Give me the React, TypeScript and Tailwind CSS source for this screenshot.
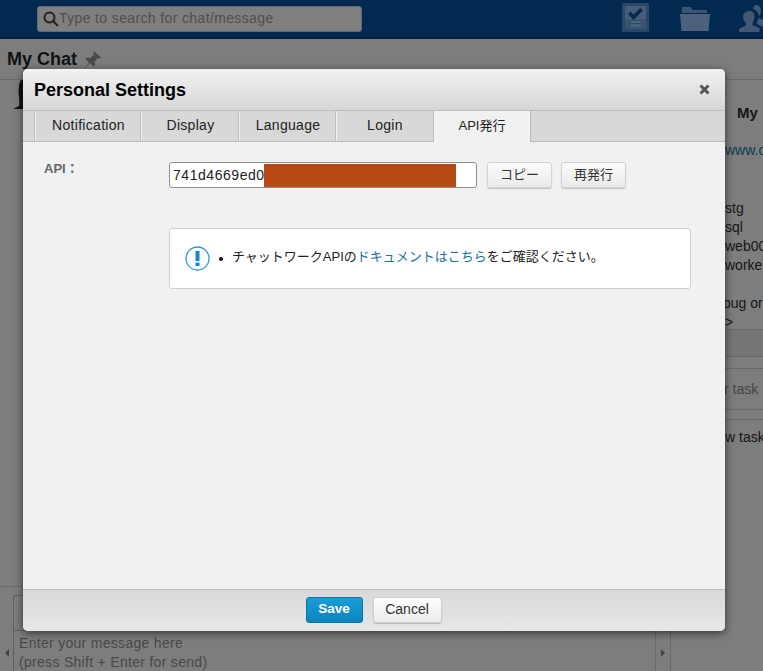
export default function App() {
  const font = { fontFamily: '"Liberation Sans", "Noto Sans CJK JP", sans-serif' };
  const tabs = ["Notification", "Display", "Language", "Login"];
  const tabWidths = ["w-[106px]", "w-[98px]", "w-[97px]", "w-[97px]"];
  return (
    <div style={font} className="relative h-[671px] w-[763px] overflow-hidden bg-[#7d7d7d] text-[#1a1a1a]">
      {/* Header */}
      <header className="flex h-[39px] items-center border-b-2 border-[#011f40] bg-[#02294f]">
        <div className="ml-[37px] flex h-[26px] w-[325px] items-center rounded-[3px] border border-[#5d6a76] bg-[#7f7f7f] pb-[1px] pl-[4px] text-[14px] tracking-[0.37px] text-[#4e4e4e]">
          <svg width="17" height="17" viewBox="0 0 17 17" fill="none" stroke="#222" strokeWidth="2">
            <circle cx="7.500" cy="7.500" r="5" />
            <path d="M11 11l4.500 4.500" strokeLinecap="round" />
          </svg>
          <span>Type to search for chat/message</span>
        </div>
        <div className="ml-auto flex items-center">
          <svg width="27" height="29" viewBox="0 0 27 29" className="mb-[2px]">
            <path d="M0 1.500A1.500 1.500 0 011.500 0h24A1.500 1.500 0 0127 1.500V29H0z" fill="#2a4768" />
            <path d="M3 3h21v14H3z" fill="#465d78" />
            <path d="M6 11l2.500-2.500 3 3 7-6.500 2.500 2.500-9.500 9.500z" fill="#0a2a4e" />
            <path d="M3 16h5.500v5h10v-5H24v10H3z" fill="#38526f" />
            <path d="M8.500 18h10v2h-10zM8.500 21.500h10v2h-10z" fill="#50667e" />
          </svg>
          <svg width="30" height="24" viewBox="0 0 30 24" className="ml-[31px]">
            <path d="M2 0h9l1 3h15v3H2z" fill="#3e556f" />
            <path d="M0 7h30l-1.500 17H1.500z" fill="#4c627c" />
          </svg>
          <svg width="24" height="27" viewBox="0 0 24 27" className="mb-[1px] ml-[29px]" fill="#425873">
            <path d="M11 6c3 0 4.500 2.500 4.500 5.500S14 17 13.500 18v2l7 3v4H0v-3l7-3.500V18c-1.500-1-3-3.500-3-6.500S6.500 6 11 6z" />
            <path d="M17 0c3 0 5 2.500 5 5.500 0 2.500-1 4.500-2.500 6V13l4.500 2v7l-3-1.500-3-1.500v-2c1-1.500 1.500-4 1.500-6.500S18 5 14 4c.5-2 1.500-4 3-4z" />
          </svg>
        </div>
      </header>

      {/* Chat title */}
      <div className="flex h-[41px] items-center gap-[7px] border-b border-[#6a6a6a] pl-[7px]">
        <span className="text-[18px] font-bold text-[#111]">My Chat</span>
        <svg width="17" height="18" viewBox="0 0 17 18" fill="#4a4a4a" className="mt-[1px]">
          <path d="M10 0l7 6.500-1.500 1-1.500-.5-3.500 3.500.5 3.500-1.500 1.500-3.500-3.500L0 18l5-6.500-3.500-3.500L3 6.500l3.500.5L10 3.500 9.500 1.500z" />
        </svg>
      </div>

      {/* Page behind the dialog */}
      <div className="flex h-[591px]">
        <main className="flex w-[671px] flex-col">
          <div className="flex-1 pl-[13px]">
            <svg width="11" height="29" viewBox="0 0 11 29" fill="#111">
              <path d="M8 0h3v29H0l6-3c1-2 0-6 0-10C5 10 6 3 8 0z" />
            </svg>
          </div>
          <div className="flex h-[85px] border-t border-[#6a6a6a] pt-[8px]">
            <div className="flex w-[13px] items-center justify-center pt-[40px]">
              <span className="h-0 w-0 border-y-[4px] border-r-[4px] border-y-transparent border-r-[#444]" />
            </div>
            <div className="flex flex-1 flex-col">
              <div className="h-[36px] rounded-tl-[3px] border-l border-t border-b border-[#5f5f5f]" />
              <div className="flex-1 overflow-hidden border-l border-[#5f5f5f] pl-[5px] pt-[3px] text-[14px] leading-[19px] tracking-[0.3px] text-[#484848]">
                <div>Enter your message here</div>
                <div>(press Shift + Enter for send)</div>
              </div>
            </div>
            <div className="flex w-[16px] items-center justify-center border-x border-[#6a6a6a] pt-[40px]">
              <span className="h-0 w-0 border-y-[4px] border-l-[4px] border-y-transparent border-l-[#444]" />
            </div>
          </div>
        </main>
        <aside className="min-w-0 flex-1 whitespace-nowrap pl-[54px] text-[14px] leading-[19px] text-[#151515]">
          <div className="mt-[23px] pl-[12px] text-[15px] font-bold leading-[20px]">My</div>
          <div className="mt-[18px] text-[#0c3a55]">www.c</div>
          <div className="mt-[39px]">stg</div>
          <div>sql</div>
          <div>web00</div>
          <div>worke</div>
          <div className="mt-[19px] -ml-[2px]">bug or</div>
          <div>&gt;</div>
          <div className="-ml-[54px] mt-[-3px] h-[28px] border-y border-[#6a6a6a] bg-[#767676]" />
          <div className="-ml-[54px] h-[12px] border-b border-[#6a6a6a]" />
          <div className="-ml-[54px] flex h-[41px] items-center border-b border-[#6a6a6a] pl-[53px] text-[#444]">r task</div>
          <div className="-ml-[54px] h-[10px] border-b border-[#6a6a6a]" />
          <div className="pt-[8px]">w task</div>
        </aside>
      </div>

      {/* Dialog */}
      <div className="absolute left-[23px] top-[69px] flex h-[562px] w-[702px] flex-col overflow-hidden rounded-[5px] bg-[#f1f1f1] shadow-[0_2px_8px_rgba(0,0,0,0.6)]">
        <div className="flex h-[42px] shrink-0 items-center justify-between border-b border-[#bdbdbd] bg-gradient-to-b from-[#f2f2f2] to-[#d6d6d6] pl-[11px] pr-[15px]">
          <h1 className="text-[18px] font-bold leading-[22px] text-black">Personal Settings</h1>
          <svg width="11" height="11" viewBox="0 0 11 11" stroke="#555" strokeWidth="3">
            <path d="M1.500 1.500l8 8M9.500 1.500l-8 8" />
          </svg>
        </div>
        <div className="flex h-[31px] shrink-0 border-b border-[#bcbcbc] bg-[#d8d8d8] pl-[12px] text-[14px] tracking-[0.3px] text-[#222]">
          {tabs.map((t, i) => (
            <div key={t} className={`flex items-center justify-center border-l border-[#f1f1f1] pb-[1px] shadow-[-1px_0_0_#bcbcbc] ${tabWidths[i]}`}>
              {t}
            </div>
          ))}
          <div className="relative z-10 -mb-px flex h-[31px] w-[98px] items-center justify-center border-x border-[#bcbcbc] bg-[#f1f1f1] pb-[1px] text-[13px] tracking-[0px]">API発行</div>
        </div>
        <div className="flex-1 pl-[21px] pt-[20px]">
          <div className="flex">
            <div className="w-[125px] text-[13px] font-bold leading-[13px] text-[#666]">API：</div>
            <div className="flex items-start">
              <div className="relative flex h-[26px] w-[308px] items-center overflow-hidden rounded-[3px] border border-[#8f8f8f] bg-white pl-[3px] text-[14px] tracking-[0.55px] text-[#222]">
                741d4669ed0
                <span className="absolute left-[94px] top-[1px] h-[23px] w-[192px] bg-[#b64a14]" />
              </div>
              <button className="ml-[10px] h-[26px] w-[65px] rounded-[3px] border border-[#d2d2d2] bg-gradient-to-b from-[#fbfbfb] to-[#eaeaea] text-[13px] text-[#333] shadow-[0_1px_1px_rgba(0,0,0,0.2)]">コピー</button>
              <button className="ml-[9px] h-[26px] w-[65px] rounded-[3px] border border-[#d2d2d2] bg-gradient-to-b from-[#fbfbfb] to-[#eaeaea] text-[13px] text-[#333] shadow-[0_1px_1px_rgba(0,0,0,0.2)]">再発行</button>
            </div>
          </div>
          <div className="ml-[125px] mt-[40px] flex h-[61px] w-[522px] items-center rounded-[3px] border border-[#cfcfcf] bg-white pl-[15px]">
            <svg width="25" height="25" viewBox="0 0 25 25" className="shrink-0">
              <circle cx="12.500" cy="12.500" r="11.500" fill="none" stroke="#2a9ad6" strokeWidth="1.300" />
              <rect x="10.500" y="5" width="4" height="10" fill="#1587c6" />
              <rect x="10.500" y="16.500" width="4" height="3.500" fill="#1587c6" />
            </svg>
            <span className="ml-[9px] h-[4px] w-[4px] rounded-full bg-[#111]" />
            <p className="-mt-[3px] ml-[9px] text-[13px] text-[#222]">
              チャットワークAPIの<span className="text-[#1a6f9f]">ドキュメントはこちら</span>をご確認ください。
            </p>
          </div>
        </div>
        <div className="flex h-[42px] shrink-0 items-center justify-center gap-[10px] border-t border-[#bdbdbd] bg-gradient-to-b from-[#d9d9d9] to-[#e7e7e7] pb-[1px] pr-[1px]">
          <button className="h-[26px] w-[57px] rounded-[3px] border border-[#0c76a8] bg-gradient-to-b from-[#1b9dd8] to-[#0a85bf] pb-[1px] text-[13.500px] font-bold text-white">Save</button>
          <button className="h-[26px] w-[69px] rounded-[3px] border border-[#d0d0d0] bg-gradient-to-b from-[#fdfdfd] to-[#ececec] pb-[1px] text-[14px] text-[#333] shadow-[0_1px_1px_rgba(0,0,0,0.2)]">Cancel</button>
        </div>
      </div>
    </div>
  );
}
